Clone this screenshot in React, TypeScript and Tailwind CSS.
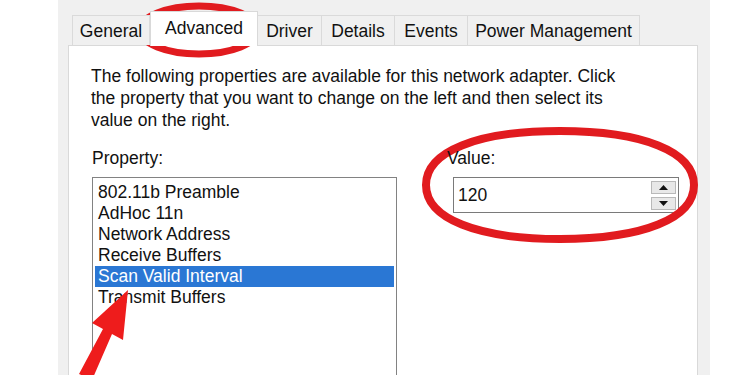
const tabs = [
  { label: "General", w: "w-[78px]" },
  { label: "Advanced", w: "w-[108px]", active: true },
  { label: "Driver", w: "w-[64px]" },
  { label: "Details", w: "w-[73px]" },
  { label: "Events", w: "w-[73px]" },
  { label: "Power Management", w: "w-[172px]" },
];

const properties = [
  "802.11b Preamble",
  "AdHoc 11n",
  "Network Address",
  "Receive Buffers",
  "Scan Valid Interval",
  "Transmit Buffers",
];

function Spinner() {
  return (
    <div className="flex flex-col gap-[3px] pr-[2px]">
      <div className="w-[25px] h-[13px] bg-[#e8e8e8] border border-[#b9b9b9] flex items-center justify-center">
        <svg width="9" height="5" viewBox="0 0 9 5">
          <path d="M0 5 L4.5 0 L9 5 Z" fill="#111" />
        </svg>
      </div>
      <div className="w-[25px] h-[13px] bg-[#e8e8e8] border border-[#b9b9b9] flex items-center justify-center">
        <svg width="9" height="5" viewBox="0 0 9 5">
          <path d="M0 0 L4.5 5 L9 0 Z" fill="#111" />
        </svg>
      </div>
    </div>
  );
}

export default function App() {
  return (
    <div className="relative w-[750px] h-[375px] overflow-hidden bg-white text-[#111] font-['Liberation_Sans',Arial,sans-serif] text-[17.5px] leading-[22px]">
      <div className="ml-[58px] w-[652px] h-full bg-[#f0f0f0] pt-[11px] pl-[10px] pr-[12px] flex flex-col">
        {/* tab strip */}
        <div className="flex items-end pl-[4px] h-[35px] relative z-10">
          {tabs.map((t) =>
            t.active ? (
              <div
                key={t.label}
                className={`${t.w} h-[35px] bg-white border border-b-0 border-[#d9d9d9] flex justify-center pt-[5px] -mb-px`}
              >
                {t.label}
              </div>
            ) : (
              <div
                key={t.label}
                className={`${t.w} h-[30px] bg-[#f0f0f0] border border-b-0 border-l-0 first:border-l border-[#dadada] flex items-center justify-center`}
              >
                {t.label}
              </div>
            )
          )}
        </div>

        {/* tab panel */}
        <div className="flex-1 bg-white border border-[#d9d9d9] pl-[22px] pt-[19px]">
          <p>
            The following properties are available for this network adapter. Click
            <br />
            the property that you want to change on the left and then select its
            <br />
            value on the right.
          </p>

          <div className="flex mt-[16px]">
            <div className="w-[305px] ml-px">
              <div>Property:</div>
              <div className="mt-[8px] h-[220px] border border-[#828282] bg-white px-[2px] pt-[4px]">
                {properties.map((p, i) => (
                  <div
                    key={p}
                    className={`h-[21px] pl-[3px] leading-[21px] ${
                      i === 4 ? "bg-[#2a77d4] text-white" : ""
                    }`}
                  >
                    {p}
                  </div>
                ))}
              </div>
            </div>

            <div className="ml-[50px]">
              <div className="relative z-10">Value:</div>
              <div className="mt-[8px] ml-[6px] w-[226px] h-[36px] border border-[#7a7a7a] bg-white flex items-center justify-between pl-[4px]">
                <span>120</span>
                <Spinner />
              </div>
            </div>
          </div>
        </div>
      </div>

      {/* red annotations */}
      <svg
        className="absolute inset-0 pointer-events-none"
        width="750"
        height="375"
        viewBox="0 0 750 375"
      >
        <ellipse cx="199" cy="30" rx="59" ry="24" fill="none" stroke="#e11b1f" strokeWidth="7" />
        <path
          d="M426 185 C426 151.5 476.9 131 560 131 C643.1 131 694 151.5 694 185 C694 218.5 643.1 239 560 239 C476.9 239 426 218.5 426 185 Z"
          fill="none"
          stroke="#e11b1f"
          strokeWidth="8"
        />
        <polygon
          points="128,290 123,340 112,334 92,380 79,374 103,329 92,323"
          fill="#ee1c1c"
        />
      </svg>
    </div>
  );
}
